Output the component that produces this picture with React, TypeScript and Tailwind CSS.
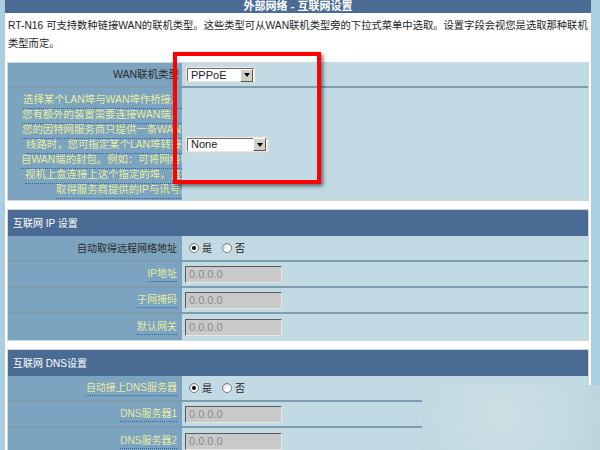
import React from 'react'

const font = { fontFamily: '"Liberation Sans", "Noto Sans CJK SC", sans-serif' }

function Select({ value, width }: { value: string; width: string }) {
  return (
    <div className={`flex h-[17px] ${width} border border-[#d8d8d8] bg-[#e8e8e8] p-px`}>
      <div className="flex flex-1 items-center border-t border-l border-t-[#6d6d6d] border-l-[#6d6d6d] bg-white">
        <span className="flex-1 pl-[3px] text-[11px] leading-none text-[#222]">{value}</span>
        <div className="mr-px flex h-[13px] w-[13px] items-center justify-center border border-t-white border-l-white border-b-[#555] border-r-[#555] bg-[#d4d0c8]">
          <div className="h-0 w-0 border-x-[3.5px] border-t-[4px] border-x-transparent border-t-black" />
        </div>
      </div>
    </div>
  )
}

function Field() {
  return (
    <div className="flex h-[17px] w-[97px] items-center border border-t-[#5a5a5a] border-l-[#5a5a5a] border-b-[#e6e6e6] border-r-[#e6e6e6] bg-[#c9c9c9] pl-[3px] text-[11px] text-[#8a8a8a]">
      0.0.0.0
    </div>
  )
}

function Radio({ on }: { on?: boolean }) {
  return (
    <span className="flex h-[10px] w-[10px] items-center justify-center rounded-full border border-[#7a7a7a] bg-[linear-gradient(135deg,#cfcfcf,#ffffff_60%)]">
      {on && <span className="h-[4px] w-[4px] rounded-full bg-black" />}
    </span>
  )
}

function Hint({ children }: { children: React.ReactNode }) {
  return (
    <span className="border-b border-dotted border-[#2f65a0] text-[#e9ec9f]">{children}</span>
  )
}

function Row({ label, hint, children, last }: { label: string; hint?: boolean; children: React.ReactNode; last?: boolean }) {
  return (
    <div className={`flex h-[26px] ${last ? '' : 'border-b-2 border-[#7d9dae]'}`}>
      <div className="flex w-[174px] items-center justify-end bg-[#7ca3bf] pr-[5px] text-[10px] text-[#2b2b2b]">
        {hint ? <Hint>{label}</Hint> : label}
      </div>
      <div className="flex flex-1 items-center bg-[#c2dae3] pl-[3px]">{children}</div>
    </div>
  )
}

function YesNo() {
  return (
    <div className="flex items-center text-[10px] text-[#222]">
      <span className="ml-[4px]"><Radio on /></span>
      <span className="ml-[3px]">是</span>
      <span className="ml-[10px]"><Radio /></span>
      <span className="ml-[3px]">否</span>
    </div>
  )
}

function Section({ title }: { title: string }) {
  return (
    <div className="flex h-[26px] items-center bg-[#4a6b93] pl-[5px] text-[10px] text-white">{title}</div>
  )
}

const lines: [string, string][] = [
  ['pl-[15px]', '选择某个LAN埠与WAN埠作桥接。若'],
  ['pl-[14px]', '您有额外的装置需要连接WAN端，但'],
  ['pl-[14px]', '您的因特网服务商只提供一条WAN端'],
  ['pl-[18px]', '线路时，您可指定某个LAN埠转接来'],
  ['pl-[13px]', '自WAN端的封包。例如：可将网络电'],
  ['pl-[17px]', '视机上盒连接上这个指定的埠，直接'],
  ['pl-[48px]', '取得服务商提供的IP与讯号。'],
]

export default function App() {
  return (
    <div className="relative flex h-[450px] w-[600px] overflow-hidden bg-[#a9cfe0] pl-[4px] pr-[8px]" style={font}>
      <div className="flex-1 border-x border-[#bcc8ce] bg-white">
        <div className="flex h-[13px] items-center justify-center bg-[#4a6b93] text-[11px] font-bold leading-none text-white">
          外部网络 - 互联网设置
        </div>
        <div className="whitespace-nowrap pl-[3px] pt-[4px] text-[10.3px] leading-[18px] text-[#1e1e1e]">
          RT-N16 可支持数种链接WAN的联机类型。这些类型可从WAN联机类型旁的下拉式菜单中选取。设置字段会视您是选取那种联机
          <br />
          类型而定。
        </div>

        <div className="mx-[2px] mt-[9px] border border-[#cdd7dc]">
          <div className="flex h-[25px] border-b-2 border-[#7d9dae]">
            <div className="flex w-[174px] items-center justify-end bg-[#7ca3bf] pr-[3px] text-[10.5px] text-[#2b2b2b]">WAN联机类型</div>
            <div className="flex flex-1 items-center bg-[#c2dae3] pl-[3px]">
              <Select value="PPPoE" width="w-[71px]" />
            </div>
          </div>
          <div className="flex h-[112px]">
            <div className="w-[174px] overflow-hidden bg-[#7ca3bf] pt-[5px] text-[10.4px]">
              {lines.map(([pad, t]) => (
                <div key={t} className={`flex h-[15px] items-center whitespace-nowrap ${pad}`}>
                  <Hint>{t}</Hint>
                </div>
              ))}
            </div>
            <div className="flex flex-1 items-center bg-[#c2dae3] pl-[3px]">
              <Select value="None" width="w-[84px]" />
            </div>
          </div>
        </div>

        <div className="mx-[2px] mt-[8px] border border-[#cdd7dc]">
          <Section title="互联网  IP 设置" />
          <Row label="自动取得远程网络地址"><YesNo /></Row>
          <Row label="IP地址" hint><Field /></Row>
          <Row label="子网掩码" hint><Field /></Row>
          <Row label="默认网关" hint last><Field /></Row>
        </div>

        <div className="mx-[2px] mt-[8px] border border-[#cdd7dc]">
          <Section title="互联网  DNS设置" />
          <Row label="自动接上DNS服务器" hint><YesNo /></Row>
          <Row label="DNS服务器1" hint><Field /></Row>
          <Row label="DNS服务器2" hint last><Field /></Row>
        </div>
      </div>

      {/* highlight box */}
      <div className="absolute left-[173px] top-[52px] h-[132px] w-[148px] border-[4px] border-[#ff0000] shadow-[2px_2px_4px_rgba(0,0,0,0.55)]" />
      {/* watermark haze */}
      <div className="absolute bottom-0 left-[422px] right-0 top-[385px] bg-[radial-gradient(circle_at_45%_45%,#cddfe5,#c2dae2_70%,#bcd3dc)]" />
    </div>
  )
}
